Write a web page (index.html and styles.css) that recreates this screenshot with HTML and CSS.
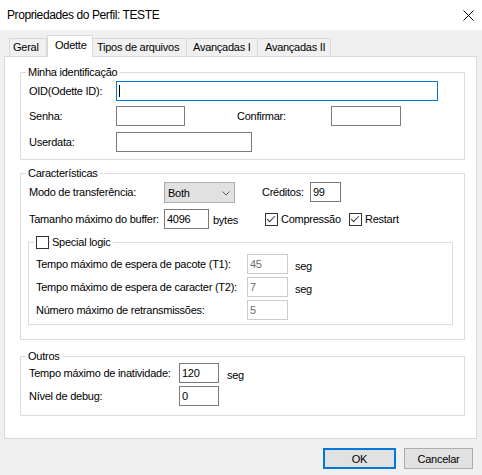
FILE: index.html
```html
<!DOCTYPE html>
<html>
    <head>
        <title>Propriedades do Perfil: TESTE</title>
        <meta charset="utf-8"/>
        <link rel="stylesheet" href="styles.css">
    </head>
    <body>

    <div id="dialog">

        <div id="titleBar">
            <span id="titleText">Propriedades do Perfil: TESTE</span>
            <svg id="closeIcon" width="11" height="11" viewBox="0 0 11 11">
                <path d="M0.5 0.5L10.5 10.5M10.5 0.5L0.5 10.5" stroke="#000" stroke-width="1" fill="none"/>
            </svg>
        </div>

        <div id="tabStrip">
            <div class="tab" id="tabGeral">Geral</div>
            <div class="tab selected" id="tabOdette">Odette</div>
            <div class="tab" id="tabTipos">Tipos de arquivos</div>
            <div class="tab" id="tabAvanc1">Avançadas I</div>
            <div class="tab" id="tabAvanc2">Avançadas II</div>
        </div>

        <div id="tabPanel">

            <!-- Minha identificação -->
            <fieldset class="group" id="groupIdent">
                <legend>Minha identificação</legend>
                <div class="row">
                    <span class="lbl" style="width:87px">OID(Odette ID):</span>
                    <span class="focusBox"><input class="txt" id="oid" value=""></span>
                </div>
                <div class="row" id="rowSenha">
                    <span class="lbl" style="width:87px">Senha:</span>
                    <input class="txt" id="senha" value="">
                    <span class="lbl" id="lblConfirmar">Confirmar:</span>
                    <input class="txt" id="confirmar" value="">
                </div>
                <div class="row" id="rowUserdata">
                    <span class="lbl" style="width:87px">Userdata:</span>
                    <input class="txt" id="userdata" value="">
                </div>
            </fieldset>

            <!-- Características -->
            <fieldset class="group" id="groupCaract">
                <legend>Características</legend>
                <div class="row">
                    <span class="lbl" style="width:135px">Modo de transferência:</span>
                    <div class="combo">
                        <span>Both</span>
                        <svg class="chevron" width="8" height="5" viewBox="0 0 8 5">
                            <path d="M0.5 0.5L4 4L7.5 0.5" stroke="#606060" stroke-width="1" fill="none"/>
                        </svg>
                    </div>
                    <span class="lbl" id="lblCreditos">Créditos:</span>
                    <input class="txt" id="creditos" value="99">
                </div>
                <div class="row" id="rowBuffer">
                    <span class="lbl" style="width:135px">Tamanho máximo do buffer:</span>
                    <input class="txt" id="buffer" value="4096">
                    <span class="lbl" id="lblBytes">bytes</span>
                    <span class="check" id="chkCompressao"><span class="box checked"></span>Compressão</span>
                    <span class="check"><span class="box checked"></span>Restart</span>
                </div>

                <fieldset class="group" id="groupSpecial">
                    <legend><span class="check"><span class="box"></span>Special logic</span></legend>
                    <div class="row">
                        <span class="lbl" style="width:211px">Tempo máximo de espera de pacote (T1):</span>
                        <input class="txt off" value="45">
                        <span class="lbl unit">seg</span>
                    </div>
                    <div class="row subRow">
                        <span class="lbl" style="width:211px">Tempo máximo de espera de caracter (T2):</span>
                        <input class="txt off" value="7">
                        <span class="lbl unit">seg</span>
                    </div>
                    <div class="row subRow">
                        <span class="lbl" style="width:211px">Número máximo de retransmissões:</span>
                        <input class="txt off" value="5">
                    </div>
                </fieldset>
            </fieldset>

            <!-- Outros -->
            <fieldset class="group" id="groupOutros">
                <legend>Outros</legend>
                <div class="row">
                    <span class="lbl" style="width:150px">Tempo máximo de inatividade:</span>
                    <input class="txt" id="inatividade" value="120">
                    <span class="lbl" id="lblSeg">seg</span>
                </div>
                <div class="row" id="rowDebug">
                    <span class="lbl" style="width:150px">Nível de debug:</span>
                    <input class="txt" id="debug" value="0">
                </div>
            </fieldset>

        </div>

        <div id="buttonBar">
            <div class="button default">OK</div>
            <div class="button">Cancelar</div>
        </div>

    </div>

    </body>
</html>
```

FILE: styles.css
```css
html, body {
    margin: 0;
    padding: 0;
    background-color: #F0F0F0;
}

body, input {
    font-family: "Liberation Sans", Arial, sans-serif;
    font-size: 11px;
    letter-spacing: -0.25px;
    color: #000;
}

#dialog {
    width: 482px;
    height: 475px;
    overflow: hidden;
}

/**** TITLE BAR ****/

#titleBar {
    height: 30px;
    background-color: white;
    display: flex;
    align-items: center;
    justify-content: space-between;
    padding: 0 7px;
    box-sizing: border-box;
}

#titleText {
    font-size: 12px;
    letter-spacing: -0.4px;
    margin-top: -1px;
}

#closeIcon {
    margin-right: 1px;
}

/**** TABS ****/

#tabStrip {
    display: flex;
    align-items: flex-end;
    height: 27px;
    padding-left: 9px;
    margin-bottom: -1px;
    position: relative;
    z-index: 1;
}

.tab {
    box-sizing: border-box;
    height: 18px;
    margin-bottom: 1px;
    border: 1px solid #D9D9D9;
    border-bottom: none;
    border-left: none;
    background-color: #F0F0F0;
    padding: 2px 0 0 4px;
    white-space: nowrap;
}

#tabGeral {
    width: 38px;
    border-left: 1px solid #D9D9D9;
    padding-left: 3px;
}

#tabOdette {
    width: 46px;
    height: 22px;
    margin-bottom: 0;
    background-color: white;
    border-left: 1px solid #D9D9D9;
    padding: 3px 0 0 7px;
}

#tabTipos {
    width: 94px;
    border-left: none;
    padding-left: 4px;
}

#tabAvanc1 {
    width: 71px;
    padding-left: 6px;
}

#tabAvanc2 {
    width: 73px;
    padding-left: 7px;
}

#tabPanel {
    box-sizing: border-box;
    width: 473px;
    height: 383px;
    margin-left: 4px;
    background-color: white;
    border: 1px solid #D9D9D9;
    overflow: hidden;
}

/**** GROUPS ****/

fieldset.group {
    margin: 0 11px 0 15px;
    padding: 0;
    border: 1px solid #DCDCDC;
    min-inline-size: 0;
}

fieldset.group legend {
    margin-left: 5px;
    padding: 0 2px;
    line-height: 13px;
    height: 13px;
}

fieldset.group > .row {
    padding-left: 8px;
}

#groupIdent {
    margin-top: 9px;
    padding: 2px 0 7px 0;
}

#groupCaract {
    margin-top: 7px;
    padding: 2px 0 14px 0;
}

#groupOutros {
    margin-top: 10px;
    padding: 0 0 9px 0;
}

#groupSpecial {
    margin: 7px 11px 0 7px;
    padding: 5px 0 4px 0;
}

#groupSpecial > .row {
    padding-left: 7px;
}

.row {
    display: flex;
    align-items: center;
    height: 20px;
}

.lbl {
    flex: none;
    white-space: nowrap;
}

#rowSenha {
    margin-top: 5px;
}

#rowUserdata {
    margin-top: 6px;
}

#rowBuffer {
    margin-top: 7px;
}

.subRow {
    margin-top: 3px;
}

#rowDebug {
    margin-top: 3px;
}

/**** CONTROLS ****/

input.txt {
    box-sizing: border-box;
    height: 20px;
    margin: 0;
    padding: 0 2px;
    border: 1px solid #7A7A7A;
    border-radius: 0;
    outline: none;
    background-color: white;
}

input.txt.off {
    width: 41px;
    border-color: #CCCCCC;
    color: #6D6D6D;
}

.focusBox {
    position: relative;
    display: flex;
}

.focusBox::after {
    content: "";
    position: absolute;
    left: 3px;
    top: 4px;
    width: 1px;
    height: 12px;
    background-color: black;
}

#oid {
    width: 322px;
    border-color: #0078D7;
}

#senha {
    width: 69px;
}

#lblConfirmar {
    width: 94px;
    margin-left: 52px;
}

#confirmar {
    width: 70px;
}

#userdata {
    width: 136px;
}

.combo {
    box-sizing: border-box;
    width: 71px;
    height: 21px;
    border: 1px solid #ADADAD;
    background-color: #E1E1E1;
    display: flex;
    align-items: center;
    justify-content: space-between;
    padding: 0 4px 0 3px;
    margin-top: 1px;
}

.chevron {
    margin-top: 1px;
}

#lblCreditos {
    width: 48px;
    margin-left: 27px;
}

#creditos {
    width: 31px;
}

#buffer {
    width: 45px;
}

#lblBytes {
    width: 52px;
    margin-left: 4px;
    padding-top: 2px;
}

.check {
    display: flex;
    align-items: center;
    white-space: nowrap;
}

#chkCompressao {
    width: 84px;
}

.box {
    box-sizing: border-box;
    width: 13px;
    height: 13px;
    border: 1px solid #333333;
    background-color: white;
    margin-right: 3px;
    position: relative;
}

.box.checked::after {
    content: "";
    position: absolute;
    left: 3px;
    top: 0px;
    width: 3px;
    height: 7px;
    border: solid #333333;
    border-width: 0 1px 1px 0;
    transform: rotate(45deg);
}

.unit {
    margin-left: 7px;
    padding-top: 3px;
}

#inatividade, #debug {
    width: 40px;
}

#lblSeg {
    margin-left: 8px;
    padding-top: 3px;
}

/**** BUTTONS ****/

#buttonBar {
    display: flex;
    justify-content: flex-end;
    gap: 8px;
    margin-top: 9px;
    padding-right: 9px;
}

.button {
    box-sizing: border-box;
    height: 21px;
    width: 69px;
    border: 1px solid #ADADAD;
    background-color: #E1E1E1;
    display: flex;
    align-items: center;
    justify-content: center;
}

.button.default {
    width: 73px;
    border: 2px solid #0078D7;
}
```
